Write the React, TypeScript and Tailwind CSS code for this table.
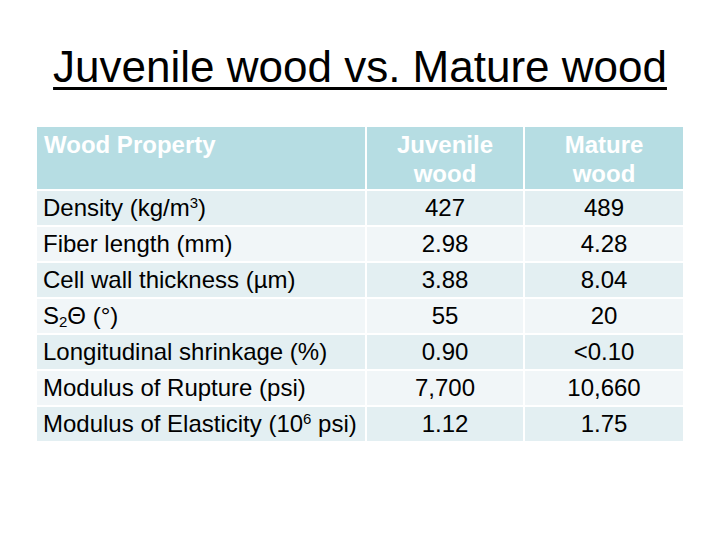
import React from "react";

type Row = { label: React.ReactNode; juv: string; mat: string };

const rows: Row[] = [
  { label: <>Density (kg/m<sup className="text-[15px]">3</sup>)</>, juv: "427", mat: "489" },
  { label: "Fiber length (mm)", juv: "2.98", mat: "4.28" },
  { label: "Cell wall thickness (µm)", juv: "3.88", mat: "8.04" },
  { label: <>S<sub className="text-[15px]">2</sub>Θ (°)</>, juv: "55", mat: "20" },
  { label: "Longitudinal shrinkage (%)", juv: "0.90", mat: "<0.10" },
  { label: "Modulus of Rupture (psi)", juv: "7,700", mat: "10,660" },
  { label: <>Modulus of Elasticity (10<sup className="text-[15px]">6</sup> psi)</>, juv: "1.12", mat: "1.75" },
];

export default function App() {
  return (
    <div
      className="w-[720px] h-[540px] bg-white flex flex-col"
      style={{ fontFamily: '"Liberation Sans", Arial, sans-serif' }}
    >
      <div className="mt-[45px] text-center text-[44px] leading-none text-black underline decoration-[3px] underline-offset-[5px]">
        Juvenile wood vs. Mature wood
      </div>
      <div className="mt-[38px] ml-[37px] grid grid-cols-[328px_156px_158px] gap-[2px] bg-white">
        <div className="h-[62px] bg-[#b6dde3] text-white font-bold text-[24px] leading-[28.8px] pt-[4px] pl-[7px]">
          Wood Property
        </div>
        <div className="h-[62px] bg-[#b6dde3] text-white font-bold text-[24px] leading-[28.8px] pt-[4px] text-center">
          Juvenile<br />wood
        </div>
        <div className="h-[62px] bg-[#b6dde3] text-white font-bold text-[24px] leading-[28.8px] pt-[4px] text-center">
          Mature<br />wood
        </div>
        {rows.map((r, i) => {
          const bg = i % 2 === 0 ? "bg-[#e3eff2]" : "bg-[#f1f6f8]";
          return (
            <React.Fragment key={i}>
              <div className={`h-[34px] ${bg} flex items-center pl-[6px] text-[24px] leading-[28.8px] text-black`}>
                <span>{r.label}</span>
              </div>
              <div className={`h-[34px] ${bg} flex items-center justify-center text-[24px] leading-[28.8px] text-black`}>
                {r.juv}
              </div>
              <div className={`h-[34px] ${bg} flex items-center justify-center text-[24px] leading-[28.8px] text-black`}>
                {r.mat}
              </div>
            </React.Fragment>
          );
        })}
      </div>
    </div>
  );
}
